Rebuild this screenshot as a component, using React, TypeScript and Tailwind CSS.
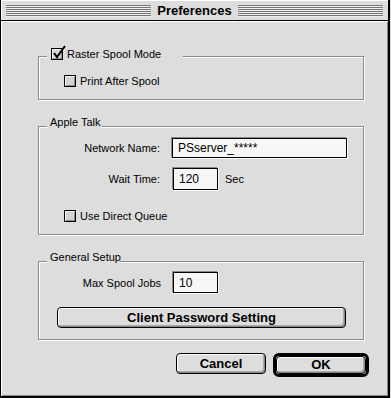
import React from "react";

const label =
  "whitespace-nowrap font-['Liberation_Sans',Arial,sans-serif] text-[11px] leading-[14px] text-black";
const bold =
  "whitespace-nowrap font-['Liberation_Sans',Arial,sans-serif] font-bold text-[13px] leading-[14px] text-black";

function Checkbox({ checked = false }: { checked?: boolean }) {
  return (
    <span className="relative inline-block h-[12px] w-[12px] shrink-0 border border-black bg-[#d4d4d4] shadow-[inset_1px_1px_0_#f4f4f4,inset_-1px_-1px_0_#8a8a8a]">
      {checked ? (
        <svg
          className="absolute left-[0px] top-[-4px]"
          width="15"
          height="15"
          viewBox="0 0 15 15"
        >
          <path d="M2 8 L5 12 L13 1" fill="none" stroke="#000" strokeWidth="2" />
        </svg>
      ) : null}
    </span>
  );
}

function Group({
  title,
  legendClass,
  className,
  children,
}: {
  title: React.ReactNode;
  legendClass: string;
  className: string;
  children: React.ReactNode;
}) {
  return (
    <div
      className={`relative w-[326px] border border-[#8a8a8a] shadow-[1px_1px_0_#fff,inset_1px_1px_0_#fff] ${className}`}
    >
      <div
        className={`absolute left-[8px] flex h-[14px] items-center bg-[#dddddd] pl-[3px] ${legendClass}`}
      >
        {title}
      </div>
      {children}
    </div>
  );
}

function Field({ value, width, height }: { value: string; width: string; height: string }) {
  return (
    <div
      className={`${width} ${height} flex items-center border border-black bg-[#f7f7f7] pl-[5px] shadow-[-1px_-1px_0_#8a8a8a,1px_1px_0_#fff] ${label} text-[12px]`}
    >
      {value}
    </div>
  );
}

function Button({ children, className }: { children: React.ReactNode; className: string }) {
  return (
    <div
      className={`flex items-center justify-center rounded-[4px] border border-black bg-[#dddddd] shadow-[inset_1px_1px_0_#fff,inset_-1px_-1px_0_#888,inset_-2px_-2px_0_#aaa] ${bold} ${className}`}
    >
      {children}
    </div>
  );
}

function Stripes() {
  return (
    <div className="h-[12px] flex-1 bg-[repeating-linear-gradient(to_bottom,#777_0px,#777_1px,#eeeeee_1px,#eeeeee_2px)]" />
  );
}

export default function App() {
  return (
    <div className="h-[398px] w-[391px] overflow-hidden bg-[#dddddd]">
      <div className="flex h-[398px] w-[390px] flex-col border-b-2 border-l border-r-2 border-black">
        <div className="flex h-[20px] shrink-0 items-center gap-[5px] bg-[#dddddd] px-[5px] pt-[1px] shadow-[inset_1px_1px_0_#fff]">
          <Stripes />
          <div className={`${bold} px-[1px]`}>Preferences</div>
          <Stripes />
        </div>
        <div className="flex flex-1 flex-col border-t border-black pl-[37px] shadow-[inset_1px_1px_0_#fff,inset_-1px_-1px_0_#888]">
          <Group
            className="mt-[35px] h-[44px] pl-[25px] pt-[17px]"
            legendClass="top-[-10px] w-[136px]"
            title={
              <span className="flex items-center gap-[4px] pl-[1px]">
                <Checkbox checked />
                <span className={label}>Raster Spool Mode</span>
              </span>
            }
          >
            <div className="flex items-center gap-[4px]">
              <Checkbox />
              <span className={label}>Print After Spool</span>
            </div>
          </Group>

          <Group
            className="mt-[26px] h-[109px] pt-[11px]"
            legendClass="top-[-12px] w-[55px]"
            title={<span className={label}>Apple Talk</span>}
          >
            <div className="flex items-center">
              <div className={`w-[122px] pr-[1px] text-right ${label}`}>Network Name:</div>
              <div className="ml-[11px]">
                <Field value="PSserver_*****" width="w-[175px]" height="h-[20px]" />
              </div>
            </div>
            <div className="mt-[10px] flex items-center">
              <div className={`w-[122px] pr-[1px] text-right ${label}`}>Wait Time:</div>
              <div className="ml-[12px]">
                <Field value="120" width="w-[45px]" height="h-[22px]" />
              </div>
              <span className={`ml-[7px] ${label}`}>Sec</span>
            </div>
            <div className="mt-[19px] flex items-center gap-[4px] pl-[25px]">
              <Checkbox />
              <span className={label}>Use Direct Queue</span>
            </div>
          </Group>

          <Group
            className="mt-[26px] h-[79px] pt-[10px]"
            legendClass="top-[-12px] w-[73px]"
            title={<span className={label}>General Setup</span>}
          >
            <div className="flex items-center">
              <div className={`w-[123px] pr-[1px] text-right ${label}`}>Max Spool Jobs</div>
              <div className="ml-[11px]">
                <Field value="10" width="w-[45px]" height="h-[21px]" />
              </div>
            </div>
            <div className="mt-[14px] pl-[18px]">
              <Button className="h-[21px] w-[289px]">Client Password Setting</Button>
            </div>
          </Group>

          <div className="mt-[13px] flex items-start pl-[138px]">
            <Button className="h-[21px] w-[90px]">Cancel</Button>
            <div className="ml-[7px] rounded-[6px] border-[3px] border-black">
              <Button className="h-[18px] w-[90px]">OK</Button>
            </div>
          </div>
        </div>
      </div>
    </div>
  );
}
